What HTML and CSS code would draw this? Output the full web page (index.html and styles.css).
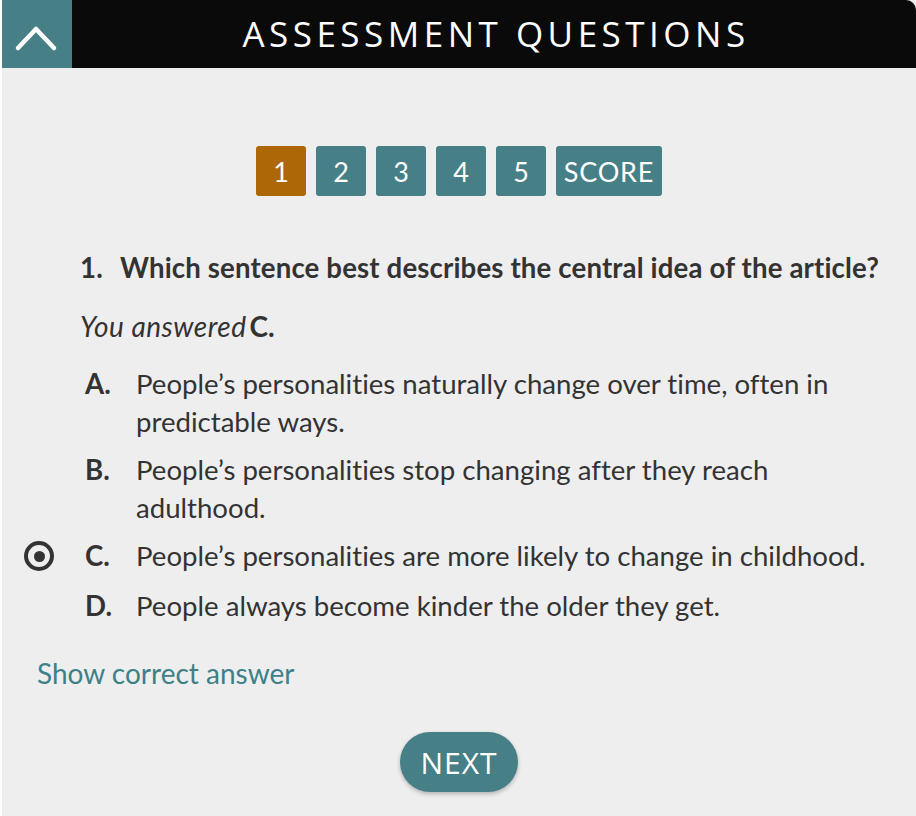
FILE: index.html
```html
<!DOCTYPE html>
<html lang="en">
<head>
<meta charset="utf-8">
<title>Assessment Questions</title>
<link rel="stylesheet" href="styles.css">
</head>
<body>
<div class="panel">
  <header class="header">
    <button class="toggle" aria-label="Collapse">
      <svg width="70" height="68" viewBox="0 0 70 68"><polyline points="16,48 34,29 52,48" fill="none" stroke="#fff" stroke-width="4.5" stroke-linecap="round" stroke-linejoin="round"/></svg>
    </button>
    <h1 class="title">ASSESSMENT QUESTIONS</h1>
  </header>

  <main class="content">
    <nav class="pager">
      <span class="page active">1</span>
      <span class="page">2</span>
      <span class="page">3</span>
      <span class="page">4</span>
      <span class="page">5</span>
      <span class="page score">SCORE</span>
    </nav>

    <div class="question">
      <span class="qnum">1.</span>
      <span class="qtext">Which sentence best describes the central idea of the article?</span>
    </div>

    <p class="answered"><em>You answered</em><strong>C.</strong></p>

    <ul class="options">
      <li class="option">
        <span class="radio-slot"></span>
        <span class="letter">A.</span>
        <span class="otext">People’s personalities naturally change over time, often in predictable ways.</span>
      </li>
      <li class="option">
        <span class="radio-slot"></span>
        <span class="letter">B.</span>
        <span class="otext">People’s personalities stop changing after they reach adulthood.</span>
      </li>
      <li class="option selected">
        <span class="radio-slot"><span class="radio"></span></span>
        <span class="letter">C.</span>
        <span class="otext">People’s personalities are more likely to change in childhood.</span>
      </li>
      <li class="option">
        <span class="radio-slot"></span>
        <span class="letter">D.</span>
        <span class="otext">People always become kinder the older they get.</span>
      </li>
    </ul>

    <a class="show" href="#">Show correct answer</a>

    <div class="actions">
      <button class="next">NEXT</button>
    </div>
  </main>
</div>
</body>
</html>
```

FILE: styles.css
```css
html, body {
  margin: 0;
  padding: 0;
  background: #ffffff;
}

body {
  font-family: "Lato", "Open Sans", sans-serif;
  color: #333333;
  font-variant-ligatures: none;
}

.panel {
  margin-left: 2px;
  min-height: 816px;
  background: #eeeeee;
}

.header {
  display: flex;
  height: 68px;
  background: #0a0a0a;
  border-top-right-radius: 10px;
}

.toggle {
  width: 70px;
  height: 68px;
  padding: 0;
  border: 0;
  background: #467f86;
  display: flex;
  align-items: center;
  justify-content: center;
}

.title {
  flex: 1;
  margin: 0;
  padding-left: 4px;
  text-align: center;
  color: #ffffff;
  font-family: "Open Sans", sans-serif;
  font-weight: 400;
  font-size: 35px;
  letter-spacing: 4.5px;
  line-height: 68px;
}

.content {
  padding: 78px 30px 0 0;
}

.pager {
  display: flex;
  justify-content: center;
  gap: 10px;
  margin-left: 30px;
}

.page {
  width: 50px;
  height: 50px;
  border-radius: 3px;
  background: #467f86;
  color: #ffffff;
  font-size: 27px;
  display: flex;
  align-items: center;
  justify-content: center;
}

.page.active {
  background: #ad6707;
}

.page.score {
  width: 106px;
  letter-spacing: 0.8px;
}

.question {
  display: flex;
  margin: 54px 0 0 78px;
  font-weight: 700;
  font-size: 27.6px;
  letter-spacing: 0.15px;
  line-height: 36px;
}

.qnum {
  width: 40px;
  flex: none;
}

.answered {
  margin: 22px 0 0 78px;
  font-size: 28px;
  line-height: 36px;
}

.answered em {
  letter-spacing: 0.5px;
}

.answered strong {
  margin-left: 3px;
}

.options {
  list-style: none;
  margin: 21px 0 0 0;
  padding: 0 0 0 22px;
}

.option {
  display: flex;
  align-items: flex-start;
  font-size: 27.6px;
  line-height: 38px;
  margin-bottom: 10px;
}

.option.selected {
  margin-bottom: 12px;
}

.radio-slot {
  width: 31px;
  height: 38px;
  flex: none;
  margin-right: 30px;
  display: flex;
  align-items: center;
}

.radio {
  width: 22px;
  height: 22px;
  border: 4.5px solid #333333;
  border-radius: 50%;
  display: flex;
  align-items: center;
  justify-content: center;
}

.radio::after {
  content: "";
  width: 11px;
  height: 11px;
  border-radius: 50%;
  background: #333333;
}

.letter {
  width: 51px;
  flex: none;
  font-weight: 700;
}

.show {
  display: block;
  margin: 30px 0 0 35px;
  color: #3e8088;
  font-size: 28px;
  line-height: 36px;
  text-decoration: none;
}

.actions {
  display: flex;
  justify-content: center;
  margin: 41px 0 0 30px;
}

.next {
  width: 118px;
  height: 60px;
  border: 0;
  border-radius: 30px;
  background: #467f86;
  color: #ffffff;
  font-family: "Open Sans", sans-serif;
  font-size: 30px;
  letter-spacing: 1px;
  padding: 0;
  box-shadow: 0 2px 4px rgba(0, 0, 0, 0.25);
}
```
